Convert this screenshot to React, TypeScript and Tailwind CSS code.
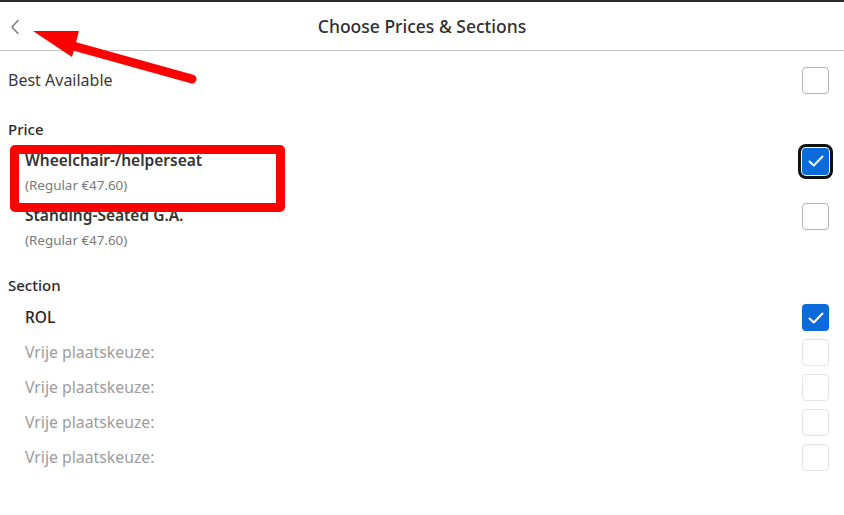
import React from 'react';

type BoxState = 'off' | 'on' | 'focused' | 'disabled';

const CheckBox: React.FC<{ state: BoxState }> = ({ state }) => {
  if (state === 'on' || state === 'focused') {
    return (
      <div
        className={
          'w-[27px] h-[27px] rounded-[4px] bg-[#0b6bd8] flex items-center justify-center ' +
          (state === 'focused' ? 'outline-[3px] outline-offset-[1px] outline-[#111]' : '')
        }
      >
        <svg width="16" height="12" viewBox="0 0 16 12" fill="none">
          <polyline points="1.5,6.5 5.8,10.5 14.5,1.5" stroke="white" strokeWidth="2" strokeLinecap="round" strokeLinejoin="round" />
        </svg>
      </div>
    );
  }
  return (
    <div
      className={
        'w-[27px] h-[27px] rounded-[4px] bg-white border ' +
        (state === 'disabled' ? 'border-[#e4e4e4]' : 'border-[#b4b4b4]')
      }
    />
  );
};

const PriceItem: React.FC<{ title: string; sub: string; state: BoxState }> = ({ title, sub, state }) => (
  <div>
    <div className="h-[28px] flex items-center justify-between">
      <span className="pl-[17px] text-[15.5px] font-semibold text-[#333]">{title}</span>
      <CheckBox state={state} />
    </div>
    <div className="h-[20px] flex items-center pl-[17px] text-[13.4px] text-[#7a7a7a]">{sub}</div>
  </div>
);

export default function App() {
  const vrije = [0, 1, 2, 3];
  return (
    <div className="relative w-[844px] h-[515px] bg-white overflow-hidden" style={{ fontFamily: '"Noto Sans", "Liberation Sans", sans-serif' }}>
      {/* header */}
      <div className="h-[51px] border-t-2 border-[#2b2b2b] border-b border-b-[#c6c6c6] flex items-center relative">
        <svg className="absolute left-[10px] top-[17px]" width="10" height="16" viewBox="0 0 10 16" fill="none">
          <polyline points="8,1.5 2,8 8,14.5" stroke="#7a7a7a" strokeWidth="1.4" strokeLinecap="round" strokeLinejoin="round" />
        </svg>
        <h1 className="w-full text-center text-[17.5px] font-medium text-[#2f2f2f]">Choose Prices &amp; Sections</h1>
      </div>

      <div className="pl-2 pr-[15px]">
        <div className="mt-[11px] h-[36px] flex items-center justify-between">
          <span className="text-[16px] text-[#3a3a3a]">Best Available</span>
          <CheckBox state="off" />
        </div>

        <div className="mt-[19px] h-[24px] flex items-center text-[15px] font-medium text-[#2a2a2a]">Price</div>

        <div className="mt-[6px]">
          <PriceItem title="Wheelchair-/helperseat" sub="(Regular €47.60)" state="focused" />
        </div>
        <div className="mt-[7px]">
          <PriceItem title="Standing-Seated G.A." sub="(Regular €47.60)" state="off" />
        </div>

        <div className="mt-[23px] h-[24px] flex items-center text-[15px] font-medium text-[#2a2a2a]">Section</div>

        <div className="mt-[3px] h-[35px] flex items-center justify-between">
          <span className="pl-[17px] text-[15.5px] font-medium text-[#1f1f1f]">ROL</span>
          <CheckBox state="on" />
        </div>
        {vrije.map((i) => (
          <div key={i} className="h-[35px] flex items-center justify-between">
            <span className="pl-[17px] text-[15.8px] text-[#9c9c9c]">Vrije plaatskeuze:</span>
            <CheckBox state="disabled" />
          </div>
        ))}
      </div>

      {/* annotations */}
      <div className="absolute left-[10px] top-[145px] w-[275px] h-[67px] border-[9px] border-[#ff0000] rounded-[5px]" />
      <svg className="absolute left-0 top-0 pointer-events-none" width="220" height="100" viewBox="0 0 220 100">
        <line x1="66" y1="44" x2="192" y2="79" stroke="#ff0000" strokeWidth="9" strokeLinecap="round" />
        <polygon points="33,31 79,31 72,57" fill="#ff0000" />
      </svg>
    </div>
  );
}
